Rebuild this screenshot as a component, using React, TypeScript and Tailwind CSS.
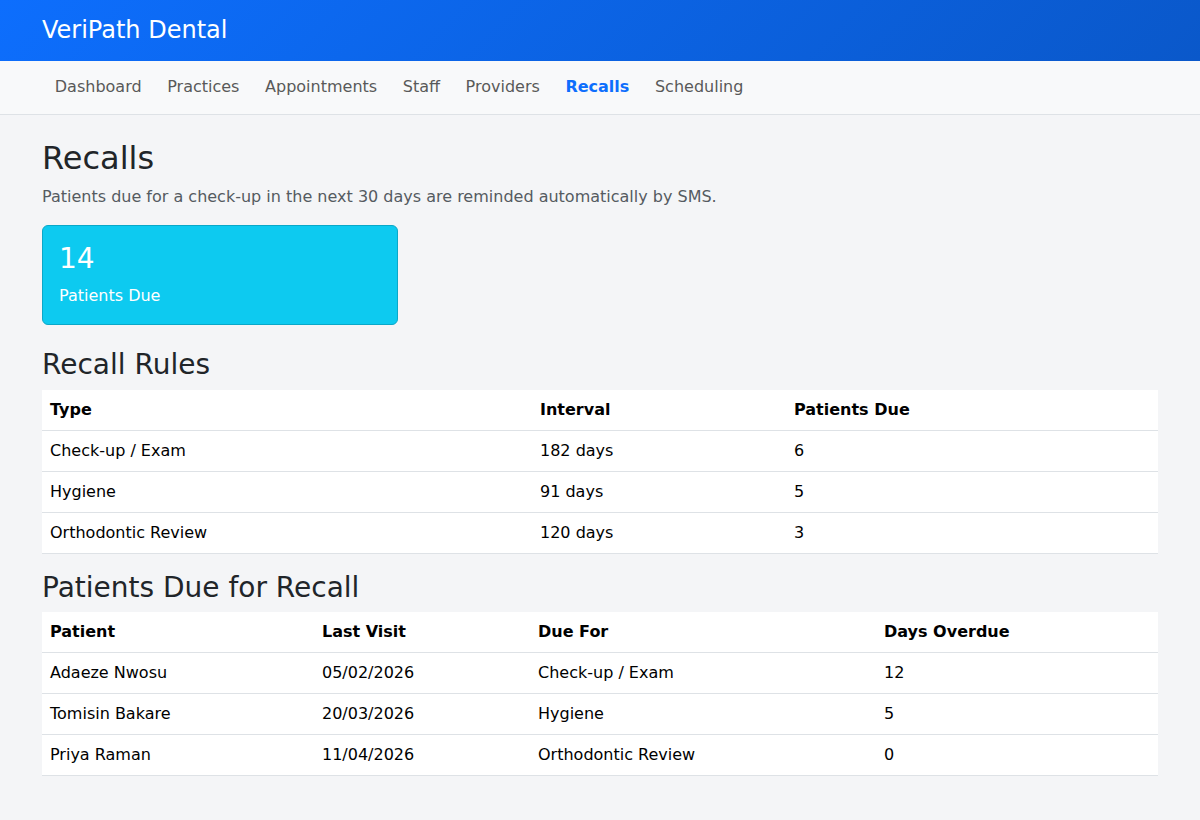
import React from 'react';

const navItems = ['Dashboard', 'Practices', 'Appointments', 'Staff', 'Providers', 'Recalls', 'Scheduling'];

const rules = [
  { type: 'Check-up / Exam', interval: '182 days', due: 6 },
  { type: 'Hygiene', interval: '91 days', due: 5 },
  { type: 'Orthodontic Review', interval: '120 days', due: 3 },
];

const patients = [
  { name: 'Adaeze Nwosu', last: '05/02/2026', dueFor: 'Check-up / Exam', overdue: 12 },
  { name: 'Tomisin Bakare', last: '20/03/2026', dueFor: 'Hygiene', overdue: 5 },
  { name: 'Priya Raman', last: '11/04/2026', dueFor: 'Orthodontic Review', overdue: 0 },
];

export default function App() {
  return (
    <div className="min-h-[820px] bg-[#f4f5f7] text-[#212529] font-['DejaVu_Sans',sans-serif] text-base leading-6">
      <header className="bg-[linear-gradient(135deg,#0d6efd,#0a58ca)] text-white">
        <div className="mx-auto w-[1140px] px-3 py-4">
          <span className="text-2xl leading-[28.8px]">VeriPath Dental</span>
        </div>
      </header>

      <nav className="bg-[#f8f9fa] border-b border-[#dee2e6]">
        <ul className="mx-auto w-[1140px] px-3 pt-[6px] pb-[7px] flex">
          {navItems.map((item) => (
            <li key={item}>
              <a
                href="#"
                className={`block px-[12.8px] py-2 ${
                  item === 'Recalls' ? 'text-[#0d6efd] font-bold' : 'text-[#595959]'
                }`}
              >
                {item}
              </a>
            </li>
          ))}
        </ul>
      </nav>

      <main className="mx-auto w-[1140px] px-3 pt-6 pb-8">
        <h2 className="text-[32px] leading-[38.4px] font-normal mb-2">Recalls</h2>
        <p className="text-[#555b61] mb-4">
          Patients due for a check-up in the next 30 days are reminded automatically by SMS.
        </p>

        <div className="w-[356px] bg-[#0dcaf0] border border-[#0aa8c8] rounded-[6px] text-white p-4 mb-[23px]">
          <h3 className="text-[28px] leading-[33.6px] mb-2">14</h3>
          <p>Patients Due</p>
        </div>

        <h3 className="text-[28px] leading-[33.6px] mb-2">Recall Rules</h3>
        <table className="w-full bg-white text-black mb-[17px] border-collapse">
          <thead>
            <tr className="border-b border-[#dee2e6]">
              <th className="text-left font-bold p-2 w-[490px]">Type</th>
              <th className="text-left font-bold p-2 w-[254px]">Interval</th>
              <th className="text-left font-bold p-2">Patients Due</th>
            </tr>
          </thead>
          <tbody>
            {rules.map((r) => (
              <tr key={r.type} className="border-b border-[#dee2e6]">
                <td className="p-2">{r.type}</td>
                <td className="p-2">{r.interval}</td>
                <td className="p-2">{r.due}</td>
              </tr>
            ))}
          </tbody>
        </table>

        <h3 className="text-[28px] leading-[33.6px] mb-2">Patients Due for Recall</h3>
        <table className="w-full bg-white text-black mb-4 border-collapse">
          <thead>
            <tr className="border-b border-[#dee2e6]">
              <th className="text-left font-bold p-2 w-[272px]">Patient</th>
              <th className="text-left font-bold p-2 w-[216px]">Last Visit</th>
              <th className="text-left font-bold p-2 w-[346px]">Due For</th>
              <th className="text-left font-bold p-2">Days Overdue</th>
            </tr>
          </thead>
          <tbody>
            {patients.map((p) => (
              <tr key={p.name} className="border-b border-[#dee2e6]">
                <td className="p-2">{p.name}</td>
                <td className="p-2">{p.last}</td>
                <td className="p-2">{p.dueFor}</td>
                <td className="p-2">{p.overdue}</td>
              </tr>
            ))}
          </tbody>
        </table>
      </main>
    </div>
  );
}
